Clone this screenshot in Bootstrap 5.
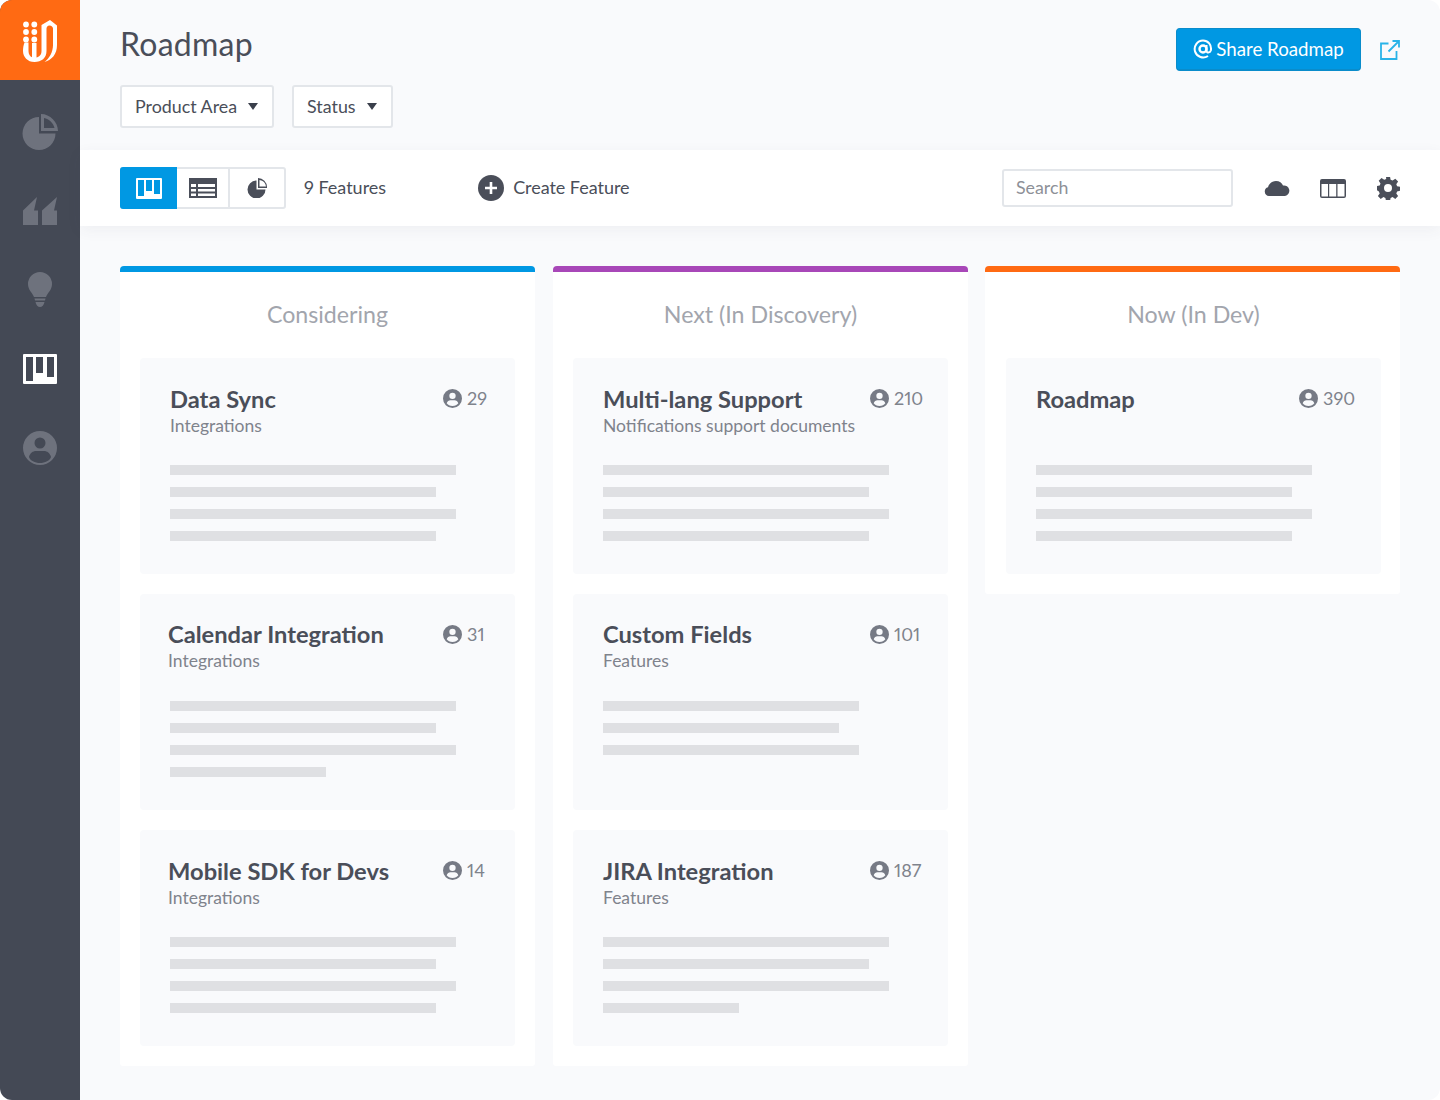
<!DOCTYPE html>
<html lang="en"><head><meta charset="utf-8"><title>Roadmap</title>
<link href="https://cdn.jsdelivr.net/npm/bootstrap@5.3.0/dist/css/bootstrap.min.css" rel="stylesheet">
<style>
html,body{height:1100px;overflow:hidden;background:#fff}
body{font-family:Lato,"Liberation Sans",sans-serif;color:#4a4e59;font-variant-numeric:proportional-nums}
.shell{width:1440px;height:1100px;border-radius:12px;overflow:hidden;background:#f9fafc}
.rail{width:80px;background:#444955;flex:none}
.rail-logo{height:80px;background:#ff6a13}
.rail-list{padding-top:32px;gap:39px}
.rail-list svg{display:block;width:40px;height:40px}
.hdr{height:150px;padding:26px 40px 0}
.page-title{font-size:32px;line-height:36px;font-weight:400;color:#4a4e59;margin:0;letter-spacing:.25px}
.filter{height:43px;border:2px solid #e3e6ea;border-radius:3px;background:#fff;font-size:17.85px;color:#4a4e59;padding:0 14px 0 13px;gap:11px}
.filter-row{gap:18px;margin-top:23px}
.caret-d{width:0;height:0;border-left:5.5px solid transparent;border-right:5.5px solid transparent;border-top:7px solid #3a3f4b}
.hdr-end{margin-top:2px;gap:15px}
.share{height:43px;width:185px;background:#0098e3;color:#fff;border:1px solid #0a8ccb;border-bottom-width:2px;border-radius:4px;font-size:18.7px;gap:3px}
.tools{height:76px;background:#fff;padding:0 40px;box-shadow:0 4px 14px rgba(60,65,80,.06);position:relative}
.seg{height:42px;border:2px solid #e3e6ea;border-radius:3px}
.seg-i{height:100%;border-right:2px solid #e3e6ea}
.seg-on{width:57px;background:#0098e3;margin:-2px 0 -2px -2px;height:42px;border-right:0;border-radius:3px 0 0 3px}
.seg-b{width:53px}.seg-c{width:54px;border-right:0}
.t-txt{font-size:18px;color:#4a4e59;padding-bottom:2px}
.t-first{margin-left:18px}
.t-create{margin-left:92px;gap:9px;letter-spacing:-.04px}
.t-create svg{margin-top:2px}
.search-in{width:231px;height:38px;border:2px solid #e3e6ea;border-radius:3px;font-size:17.8px;color:#8d9097;padding:0 12px 2px;background:#fff;margin-left:auto}
.ic-cloud{margin-left:31px}.ic-table{margin-left:30px}.ic-gear{margin-left:31px}
.cols{padding:40px 40px 0;gap:18px}
.kcol{width:415px;background:#fff;border-top:6px solid;border-radius:4px 4px 3px 3px;padding:0 20px 20px;flex:none}
.kcol.k3{margin-left:-1px;padding:0 19px 20px 21px}
.c-blue{border-color:#0098e3}.c-purple{border-color:#a847b8}.c-orange{border-color:#ff6a13}
.k-head{height:86px;font-size:23.2px;color:#a2a5ad;padding-top:28px;line-height:28px;text-align:center}
.tile{height:216px;background:#f9fafc;border-radius:4px;padding:24px 0 0 30px;margin-bottom:20px}
.tile:last-child{margin-bottom:0}
.tile-t{font-size:23.7px;font-weight:700;line-height:35px;color:#4a4e59;white-space:nowrap;flex:1}
.tile-s{font-size:17.5px;line-height:21px;color:#7f838c;margin-top:-2px}
.shift{margin-left:-2px}
.count{font-size:18px;color:#7f838c;gap:5px;height:32px;flex:none}
.k1 .count{width:72px}.k2 .count{width:78px}.k3 .count{width:82px}
.count svg{width:19px;height:19px}
.lines{margin-top:29px;gap:12px}
.lin{height:10px;background:#dfe0e3}
.tile:nth-of-type(2){padding-top:23px}
.tile:nth-of-type(2) .lines{margin-top:30px}
.tile:nth-of-type(2) .count{margin-top:1px}
</style></head><body>
<div class="shell d-flex">
<aside class="rail d-flex flex-column">
<div class="rail-logo d-flex align-items-center justify-content-center">
<svg width="40" height="48" viewBox="20 15 40 48" fill="#fff"><circle cx="26" cy="23.500" r="2.900"/><circle cx="34.300" cy="23.500" r="2.900"/><circle cx="26" cy="31" r="2.900"/><circle cx="34.300" cy="31" r="2.900"/><circle cx="26" cy="38.500" r="2.900"/><circle cx="34.300" cy="38.500" r="2.900"/><path d="M24 41.500h4.500V50c0 3 1.500 5.500 3.500 6.300V42h4.500v14.500c2.500-.5 5-2.500 5-6.500V24L50 19l7 5.500V44c0 9-5 15-12.500 17 5-4 8.500-10 8.500-17V27.500c0-1.500-1.500-3-3.500-3s-3 1.500-3 3V50c0 7-5 11-12 11s-11.500-5-11.500-11c0-3 .5-6 1.500-8.500z"/></svg>
</div>
<div class="rail-list d-flex flex-column align-items-center">
<svg viewBox="0 0 40 40" fill="#6e727d"><path d="M19 5V21.500H35.500A16.500 16.500 0 1 1 19 5z"/><path fill-rule="evenodd" d="M21 2c9 0 17 8 17 17H21zM24 6V16H34.500C33.500 11 29 7 24 6z"/></svg>
<svg viewBox="0 0 40 40" fill="#6e727d"><path d="M3 19.500 17 6 14 19.500H18V34H3zM22 19.500 37 6 34 19.500H37V34H22z"/></svg>
<svg viewBox="0 0 40 40" fill="#6e727d"><path d="M20 2a12 12 0 0 1 12 12c0 6-4 8-6 13H14c-2-5-6-7-6-13A12 12 0 0 1 20 2z"/><path d="M14.500 28.500h11l-.5 2H15zM15.500 32h9C24 35 22 37 20 37s-4-2-4.500-5z"/></svg>
<svg viewBox="0 0 40 40" fill="#fff"><path fill-rule="evenodd" d="M4 5h32a1 1 0 0 1 1 1v28a1 1 0 0 1-1 1H4a1 1 0 0 1-1-1V6a1 1 0 0 1 1-1zM6 8V32h7V8zM16 8V24h7V8zM27 8V28h7V8z"/></svg>
<svg viewBox="0 0 40 40" fill="#6e727d"><path fill-rule="evenodd" d="M20 3a17 17 0 1 1 0 34 17 17 0 0 1 0-34zM20 9.500a5.500 5.500 0 1 0 0 11 5.500 5.500 0 0 0 0-11zM9 29c1 3.500 6 6 11 6s10-2.500 11-6c-1-4-4-6-7-6h-8c-3 0-6 2-7 6z"/></svg>
</div>
</aside>
<main class="flex-grow-1">
<header class="hdr d-flex justify-content-between align-items-start">
<div>
<h1 class="page-title">Roadmap</h1>
<div class="filter-row d-flex">
<div class="filter d-flex align-items-center">Product Area<span class="caret-d"></span></div>
<div class="filter d-flex align-items-center">Status<span class="caret-d"></span></div>
</div>
</div>
<div class="hdr-end d-flex align-items-center">
<div class="share d-flex align-items-center justify-content-center"><svg width="20" height="20" viewBox="0 0 20 20" fill="none" stroke="#fff"><circle cx="10" cy="10" r="3.500" stroke-width="2.400"/><path d="M13.500 6v6c0 2 3.500 2 4.300-.5C19 6 15 1.500 10 1.500A8.500 8.500 0 1 0 15 17" stroke-width="2"/></svg>Share Roadmap</div>
<svg class="ms-1" width="20" height="20" viewBox="0 0 20 20" fill="none" stroke="#29b3e8" stroke-width="1.800"><path d="M8.500 3.500H1v15.500h15.500V11M8.500 11.500 18.500 1.500M12.500 1h6.500v6.500"/></svg>
</div>
</header>
<section class="tools d-flex align-items-center">
<div class="seg d-flex align-items-stretch">
<div class="seg-i seg-on d-flex align-items-center justify-content-center"><svg width="26" height="21" viewBox="0 0 26 21" fill="#fff"><path fill-rule="evenodd" d="M1 0h24a1 1 0 0 1 1 1v19a1 1 0 0 1-1 1H1a1 1 0 0 1-1-1V1a1 1 0 0 1 1-1zM2 2v16h6V2zM10 2v11h6V2zM18 2v14h6V2z"/></svg></div>
<div class="seg-i seg-b d-flex align-items-center justify-content-center"><svg width="28" height="20" viewBox="0 0 28 20" fill="#4a4e59"><path fill-rule="evenodd" d="M0 0h28v20H0zM2 6v3h5V6zM9 6v3h17V6zM2 11v2.500h5V11zM9 11v2.500h17V11zM2 15.500V18h5v-2.500zM9 15.500V18h17v-2.500z"/></svg></div>
<div class="seg-i seg-c d-flex align-items-center justify-content-center"><svg width="21" height="20" viewBox="0 0 21 20" fill="#4a4e59"><path d="M9.500 2.500a9 9 0 1 0 9 9h-9z"/><path fill-rule="evenodd" d="M11 0a9 9 0 0 1 9 9v1H11zM12.500 2v6.500H19A7.500 7.500 0 0 0 12.500 2z"/></svg></div>
</div>
<div class="t-txt t-first">9 Features</div>
<div class="t-txt t-create d-flex align-items-center"><svg width="26" height="26" viewBox="0 0 26 26"><circle cx="13" cy="13" r="13" fill="#4a4e59"/><path d="M13 7v12M7 13h12" stroke="#fff" stroke-width="2.600"/></svg>Create Feature</div>
<div class="search-in d-flex align-items-center">Search</div>
<svg class="ic-cloud" width="26" height="15" viewBox="0 0 26 15" fill="#4a4e59"><path d="M5 15a4.500 4.500 0 0 1-1-8.800C5 2.500 8 0 12 0c3.500 0 6 1.800 7 4.500A5.300 5.300 0 0 1 21 15z"/></svg>
<svg class="ic-table" width="26" height="19" viewBox="0 0 26 19" fill="#4a4e59"><path fill-rule="evenodd" d="M2 0h22a2 2 0 0 1 2 2v15a2 2 0 0 1-2 2H2a2 2 0 0 1-2-2V2a2 2 0 0 1 2-2zM1.500 5v12.500h6.500V5zM9.200 5v12.500h7V5zM17.500 5v12.500h7V5z"/></svg>
<svg class="ic-gear" width="23" height="23" viewBox="0 0 23 23" fill="#4a4e59"><path fill-rule="evenodd" d="M9.500 0h4l.6 3.200 2 .8 2.700-1.800 2.800 2.800-1.800 2.700.8 2 3.200.6v4l-3.200.6-.8 2 1.800 2.700-2.800 2.800-2.700-1.800-2 .8-.6 3.200h-4l-.6-3.200-2-.8-2.700 1.800-2.800-2.800 1.800-2.700-.8-2L0 13.500v-4l3.200-.6.8-2L2.200 4.200 5 1.400l2.700 1.800 2-.8zM11.500 7.500a4 4 0 1 0 0 8 4 4 0 0 0 0-8z" transform="translate(-.5 -.5)"/></svg>
</section>
<section class="cols d-flex align-items-start">
<div class="kcol k1 c-blue">
<div class="k-head">Considering</div>
<article class="tile"><div class="d-flex"><div class="tile-t">Data Sync</div><div class="count d-flex align-items-center"><svg viewBox="0 0 18 18" fill="#767a85"><path fill-rule="evenodd" d="M9 0a9 9 0 1 1 0 18A9 9 0 0 1 9 0zM9 3.500a3 3 0 1 0 0 6 3 3 0 0 0 0-6zM3.500 13.500C4.500 15 6.500 16 9 16s4.500-1 5.500-2.500c-.5-1.700-2-2.800-3.500-2.800H7c-1.500 0-3 1.100-3.500 2.800z"/></svg>29</div></div><div class="tile-s">Integrations</div>
<div class="lines d-flex flex-column"><div class="lin" style="width:286px"></div><div class="lin" style="width:266px"></div><div class="lin" style="width:286px"></div><div class="lin" style="width:266px"></div></div></article>
<article class="tile"><div class="d-flex"><div class="tile-t shift">Calendar Integration</div><div class="count d-flex align-items-center"><svg viewBox="0 0 18 18" fill="#767a85"><path fill-rule="evenodd" d="M9 0a9 9 0 1 1 0 18A9 9 0 0 1 9 0zM9 3.500a3 3 0 1 0 0 6 3 3 0 0 0 0-6zM3.500 13.500C4.500 15 6.500 16 9 16s4.500-1 5.500-2.500c-.5-1.700-2-2.800-3.500-2.800H7c-1.500 0-3 1.100-3.500 2.800z"/></svg>31</div></div><div class="tile-s shift">Integrations</div>
<div class="lines d-flex flex-column"><div class="lin" style="width:286px"></div><div class="lin" style="width:266px"></div><div class="lin" style="width:286px"></div><div class="lin" style="width:156px"></div></div></article>
<article class="tile"><div class="d-flex"><div class="tile-t shift">Mobile SDK for Devs</div><div class="count d-flex align-items-center"><svg viewBox="0 0 18 18" fill="#767a85"><path fill-rule="evenodd" d="M9 0a9 9 0 1 1 0 18A9 9 0 0 1 9 0zM9 3.500a3 3 0 1 0 0 6 3 3 0 0 0 0-6zM3.500 13.500C4.500 15 6.500 16 9 16s4.500-1 5.500-2.500c-.5-1.700-2-2.800-3.500-2.800H7c-1.500 0-3 1.100-3.500 2.800z"/></svg>14</div></div><div class="tile-s shift">Integrations</div>
<div class="lines d-flex flex-column"><div class="lin" style="width:286px"></div><div class="lin" style="width:266px"></div><div class="lin" style="width:286px"></div><div class="lin" style="width:266px"></div></div></article>
</div>
<div class="kcol k2 c-purple">
<div class="k-head">Next (In Discovery)</div>
<article class="tile"><div class="d-flex"><div class="tile-t">Multi-lang Support</div><div class="count d-flex align-items-center"><svg viewBox="0 0 18 18" fill="#767a85"><path fill-rule="evenodd" d="M9 0a9 9 0 1 1 0 18A9 9 0 0 1 9 0zM9 3.500a3 3 0 1 0 0 6 3 3 0 0 0 0-6zM3.500 13.500C4.500 15 6.500 16 9 16s4.500-1 5.500-2.500c-.5-1.700-2-2.800-3.500-2.800H7c-1.500 0-3 1.100-3.500 2.800z"/></svg>210</div></div><div class="tile-s">Notifications support documents</div>
<div class="lines d-flex flex-column"><div class="lin" style="width:286px"></div><div class="lin" style="width:266px"></div><div class="lin" style="width:286px"></div><div class="lin" style="width:266px"></div></div></article>
<article class="tile"><div class="d-flex"><div class="tile-t">Custom Fields</div><div class="count d-flex align-items-center"><svg viewBox="0 0 18 18" fill="#767a85"><path fill-rule="evenodd" d="M9 0a9 9 0 1 1 0 18A9 9 0 0 1 9 0zM9 3.500a3 3 0 1 0 0 6 3 3 0 0 0 0-6zM3.500 13.500C4.500 15 6.500 16 9 16s4.500-1 5.500-2.500c-.5-1.700-2-2.800-3.500-2.800H7c-1.500 0-3 1.100-3.500 2.800z"/></svg>101</div></div><div class="tile-s">Features</div>
<div class="lines d-flex flex-column"><div class="lin" style="width:256px"></div><div class="lin" style="width:236px"></div><div class="lin" style="width:256px"></div></div></article>
<article class="tile"><div class="d-flex"><div class="tile-t">JIRA Integration</div><div class="count d-flex align-items-center"><svg viewBox="0 0 18 18" fill="#767a85"><path fill-rule="evenodd" d="M9 0a9 9 0 1 1 0 18A9 9 0 0 1 9 0zM9 3.500a3 3 0 1 0 0 6 3 3 0 0 0 0-6zM3.500 13.500C4.500 15 6.500 16 9 16s4.500-1 5.500-2.500c-.5-1.700-2-2.800-3.500-2.800H7c-1.500 0-3 1.100-3.500 2.800z"/></svg>187</div></div><div class="tile-s">Features</div>
<div class="lines d-flex flex-column"><div class="lin" style="width:286px"></div><div class="lin" style="width:266px"></div><div class="lin" style="width:286px"></div><div class="lin" style="width:136px"></div></div></article>
</div>
<div class="kcol k3 c-orange">
<div class="k-head">Now (In Dev)</div>
<article class="tile"><div class="d-flex"><div class="tile-t">Roadmap</div><div class="count d-flex align-items-center"><svg viewBox="0 0 18 18" fill="#767a85"><path fill-rule="evenodd" d="M9 0a9 9 0 1 1 0 18A9 9 0 0 1 9 0zM9 3.500a3 3 0 1 0 0 6 3 3 0 0 0 0-6zM3.500 13.500C4.500 15 6.500 16 9 16s4.500-1 5.500-2.500c-.5-1.700-2-2.800-3.500-2.800H7c-1.500 0-3 1.100-3.500 2.800z"/></svg>390</div></div><div class="tile-s">&nbsp;</div>
<div class="lines d-flex flex-column"><div class="lin" style="width:276px"></div><div class="lin" style="width:256px"></div><div class="lin" style="width:276px"></div><div class="lin" style="width:256px"></div></div></article>
</div>
</section>
</main>
</div>
<script src="https://cdn.jsdelivr.net/npm/bootstrap@5.3.0/dist/js/bootstrap.bundle.min.js"></script>
</body></html>
